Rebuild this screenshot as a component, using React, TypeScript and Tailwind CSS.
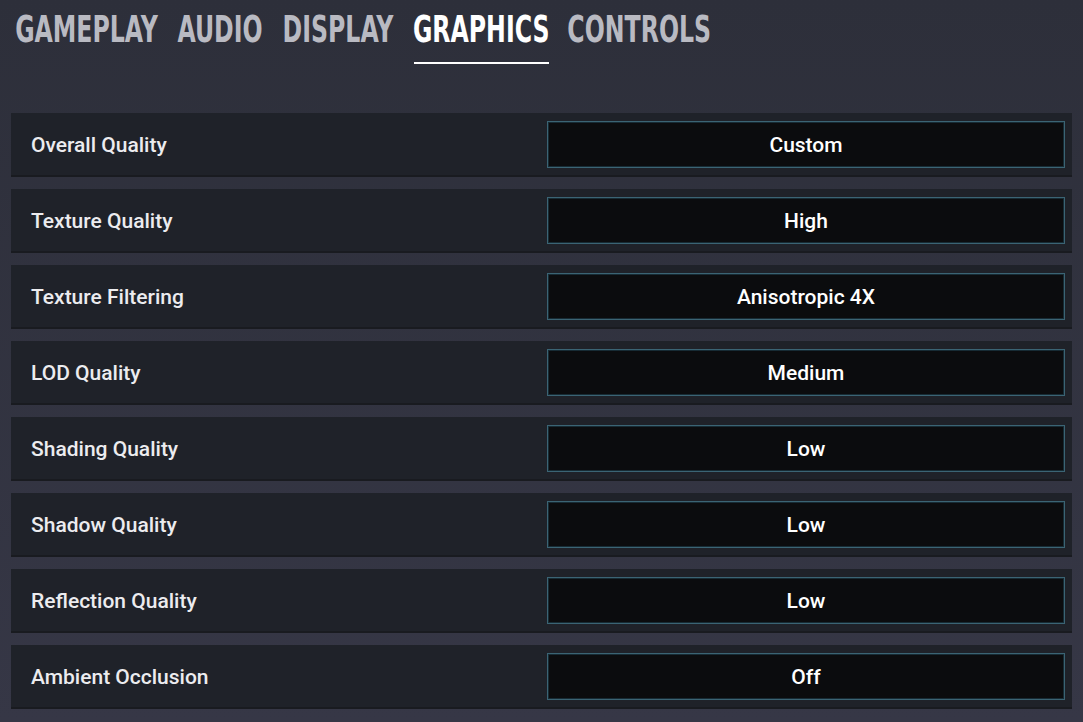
const tabs = [
  { name: "GAMEPLAY", width: "w-[140px]" },
  { name: "AUDIO", width: "w-[79px]" },
  { name: "DISPLAY", width: "w-[109px]" },
  { name: "GRAPHICS", width: "w-[131px]" },
  { name: "CONTROLS", width: "w-[137px]" },
];

const settings = [
  { label: "Overall Quality", value: "Custom" },
  { label: "Texture Quality", value: "High" },
  { label: "Texture Filtering", value: "Anisotropic 4X" },
  { label: "LOD Quality", value: "Medium" },
  { label: "Shading Quality", value: "Low" },
  { label: "Shadow Quality", value: "Low" },
  { label: "Reflection Quality", value: "Low" },
  { label: "Ambient Occlusion", value: "Off" },
];

export default function App() {
  return (
    <div className="h-[722px] w-full overflow-hidden bg-gradient-to-b from-[#2d2f3a] to-[#363746] font-['Roboto',sans-serif]">
      {/* condensed header tabs: DejaVu Condensed squeezed to match */}
      <nav className="flex gap-6 pl-[16px] pt-[9px]">
        {tabs.map((tab) => {
          const active = tab.name === "GRAPHICS";
          return (
            <div key={tab.name} className={"flex flex-col items-center " + tab.width}>
              <span
                className={
                  "scale-x-[0.71] whitespace-nowrap font-['DejaVu_Sans_Condensed',sans-serif] text-[37px] font-bold leading-[41px] " +
                  (active ? "text-white" : "text-[#b9bac2]")
                }
              >
                {tab.name}
              </span>
              <span
                className={
                  "mt-[12px] h-[2px] w-[calc(100%+4px)] " + (active ? "bg-white" : "bg-transparent")
                }
              />
            </div>
          );
        })}
      </nav>

      <div className="mx-[11px] mt-[49px] flex flex-col gap-[12px]">
        {settings.map((s) => (
          <div
            key={s.label}
            className="flex h-[64px] items-center justify-between border-b-2 border-[#191b20] bg-[#1f2229] pl-[20px] pr-[7px]"
          >
            <span className="pt-[4px] text-[21px] font-medium text-[#ececef]">{s.label}</span>
            <div className="flex h-[47px] w-[518px] items-center justify-center border border-[#3b6474] bg-[#0b0c0e] shadow-[inset_0_0_0_1px_#172b34]">
              <span className="pt-[4px] text-[21px] font-medium text-white">{s.value}</span>
            </div>
          </div>
        ))}
      </div>
    </div>
  );
}
